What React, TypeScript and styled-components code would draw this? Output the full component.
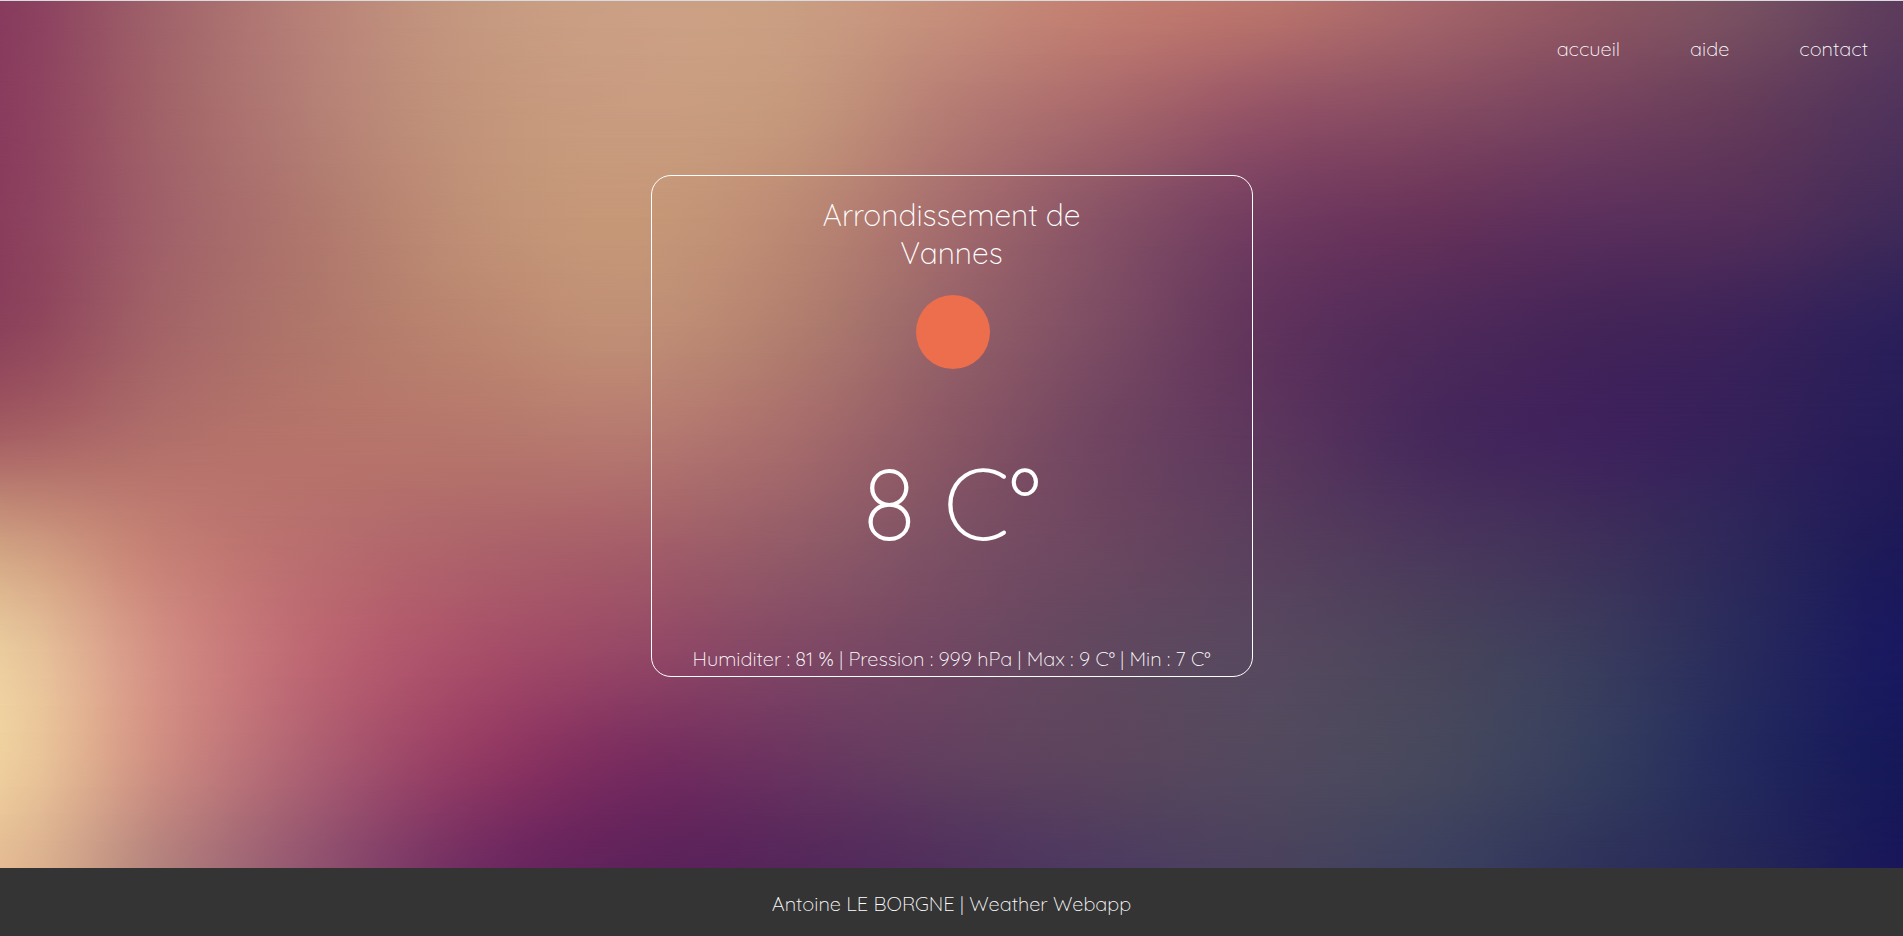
import React from "react";
import styled, { createGlobalStyle } from "styled-components";

type Rgb = [number, number, number];

/* Colour mesh of the sky: each line is a row, evenly spaced left to right. */
const MESH = [
  "883b5e a0626a b88278 c59980 cba085 ca9e82 c78f7b c37e71 ba756c a6666a 905862 795162 5d3b5c",
  "8a3c5e a16268 b58076 c3957b c99c80 c5987c b57c74 a7676b 945366 864c62 77435f 653c5a 50335c",
  "8a3d5c a06069 b0796e c09076 c69878 bc8974 a46c6d 875266 723c60 68335a 5c305c 542f59 412b59",
  "8c415b a36367 b0776b bb8670 c08f76 b17e6f 966269 7b4b63 60335c 502b5a 452558 3c2359 2c205a",
  "a55e63 b06e6a b6746a b6776c b67a70 a76d6c 8a5765 6f4461 5c365d 47295b 3f225c 34215a 251c58",
  "cf9f81 c47f74 b86e6e ad646a a55f69 935c68 7c5064 6b4660 593f5d 4b375c 3f305a 2d275a 1d1958",
  "eacc9e d38f84 bc6672 a84f69 954866 804865 704762 60485f 57485f 49445b 3b3c5d 282a5c 191860",
  "efd09e cf8e82 ac5e71 933a63 782d5f 6b3560 62405f 5b455d 52495e 47485d 363e5e 23295d 161859",
  "e4bb93 b4827d 90526f 702c61 5e225b 55275b 50315d 4d3b60 4a425d 3d405e 30335b 252758 19165a",
].map((line) =>
  line.split(" ").map((hex): Rgb => [
    parseInt(hex.slice(0, 2), 16),
    parseInt(hex.slice(2, 4), 16),
    parseInt(hex.slice(4, 6), 16),
  ])
);

const STEPS = 4;

/* Catmull-Rom subdivision, so the mesh blends without visible creases. */
function subdivide(points: Rgb[]): Rgb[] {
  const at = (i: number) => points[Math.max(0, Math.min(points.length - 1, i))];
  const out: Rgb[] = [];
  for (let i = 0; i < points.length - 1; i++) {
    for (let s = 0; s < STEPS; s++) {
      const t = s / STEPS;
      out.push(
        [0, 1, 2].map((c) => {
          const [a, b, d, e] = [at(i - 1)[c], at(i)[c], at(i + 1)[c], at(i + 2)[c]];
          return (
            0.5 *
            (2 * b + (d - a) * t + (2 * a - 5 * b + 4 * d - e) * t * t + (3 * b - a - 3 * d + e) * t * t * t)
          );
        }) as Rgb
      );
    }
  }
  out.push(points[points.length - 1]);
  return out;
}

const wide = MESH.map(subdivide);
const columns = wide[0].map((_, x) => subdivide(wide.map((row) => row[x])));
const BANDS = columns[0].map((_, y) =>
  columns.map((column) => `rgb(${column[y].map(Math.round).join(",")})`).join(",")
);
const fade = (index: number) => {
  const span = 100 / (BANDS.length - 1);
  return index === 0
    ? "none"
    : `linear-gradient(to bottom, transparent ${(index - 1) * span}%, #000 ${index * span}%)`;
};

const GlobalStyle = createGlobalStyle`
  * { box-sizing: border-box; }
  body {
    margin: 0;
    background: #343434;
    color: #fff;
    font-family: Quicksand, Lato, "Open Sans", sans-serif;
    font-weight: 300;
    font-size: 20px;
    line-height: 25px;
  }
`;

const Page = styled.div`
  display: flex;
  flex-direction: column;
  min-height: 100vh;
`;

const Scene = styled.div`
  flex: 1;
  display: grid;
  grid-template: minmax(0, 1fr) / minmax(0, 1fr);
  border-top: 1px solid #d9dcdf;

  > * {
    grid-area: 1 / 1;
  }
`;

const Band = styled.div<{ $colors: string; $fade: string }>`
  background: linear-gradient(to right, ${(p) => p.$colors});
  mask-image: ${(p) => p.$fade};
`;

const Content = styled.div`
  z-index: 1;
  display: flex;
  flex-direction: column;
`;

const Nav = styled.nav`
  display: flex;
  justify-content: flex-end;
  gap: 70px;
  padding: 35px;
`;

const NavLink = styled.a`
  color: #fff;
  text-decoration: none;
`;

const Main = styled.main`
  flex: 1;
  display: flex;
  justify-content: center;
  align-items: flex-start;
  padding: 79px 20px 40px;
`;

const Card = styled.section`
  display: flex;
  flex-direction: column;
  align-items: center;
  width: 602px;
  min-height: 502px;
  padding: 20px 20px 5px;
  border: 1px solid #fff;
  border-radius: 20px;
  text-align: center;
`;

const City = styled.h1`
  width: 300px;
  margin: 0;
  font-size: 30px;
  font-weight: inherit;
  line-height: 38px;
`;

const Sun = styled.svg`
  width: 76px;
  height: 74px;
  margin-top: 23px;
`;

const Temperature = styled.p`
  margin: 71px 0 0;
  font-size: 100px;
  line-height: 125px;
`;

const Details = styled.p`
  margin: auto 0 0;
`;

const Footer = styled.footer`
  padding: 23px 20px 20px;
  background: #343434;
  text-align: center;
`;

const links = ["accueil", "aide", "contact"];

export default function App() {
  return (
    <>
      <GlobalStyle />
      <Page>
        <Scene>
          {BANDS.map((colors, i) => (
            <Band key={i} $colors={colors} $fade={fade(i)} />
          ))}
          <Content>
            <Nav>
              {links.map((label) => (
                <NavLink key={label} href={`#${label}`}>
                  {label}
                </NavLink>
              ))}
            </Nav>
            <Main>
              <Card>
                <City>Arrondissement de Vannes</City>
                <Sun viewBox="0 0 76 74" aria-hidden="true">
                  <circle cx="39" cy="37" r="37" fill="#ec6e4c" />
                </Sun>
                <Temperature>8 C°</Temperature>
                <Details>Humiditer : 81 % | Pression : 999 hPa | Max : 9 C° | Min : 7 C°</Details>
              </Card>
            </Main>
          </Content>
        </Scene>
        <Footer>Antoine LE BORGNE | Weather Webapp</Footer>
      </Page>
    </>
  );
}
